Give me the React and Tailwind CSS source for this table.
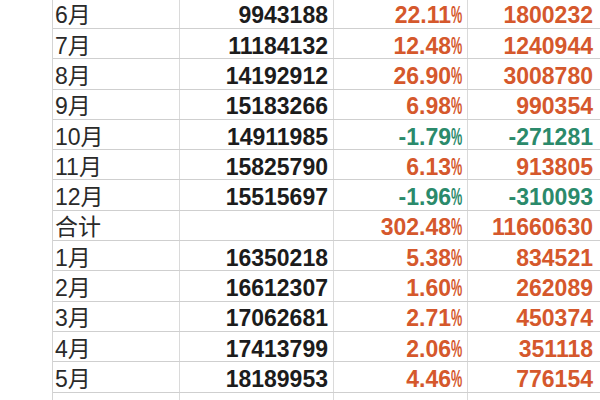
const rows = [
  { m: '6月', v: '9943188', p: '22.11', d: '1800232', neg: false },
  { m: '7月', v: '11184132', p: '12.48', d: '1240944', neg: false },
  { m: '8月', v: '14192912', p: '26.90', d: '3008780', neg: false },
  { m: '9月', v: '15183266', p: '6.98', d: '990354', neg: false },
  { m: '10月', v: '14911985', p: '-1.79', d: '-271281', neg: true },
  { m: '11月', v: '15825790', p: '6.13', d: '913805', neg: false },
  { m: '12月', v: '15515697', p: '-1.96', d: '-310093', neg: true },
  { m: '合计', v: '', p: '302.48', d: '11660630', neg: false },
  { m: '1月', v: '16350218', p: '5.38', d: '834521', neg: false },
  { m: '2月', v: '16612307', p: '1.60', d: '262089', neg: false },
  { m: '3月', v: '17062681', p: '2.71', d: '450374', neg: false },
  { m: '4月', v: '17413799', p: '2.06', d: '351118', neg: false },
  { m: '5月', v: '18189953', p: '4.46', d: '776154', neg: false },
  { m: '', v: '', p: '', d: '', neg: false },
]

function Pct({ value }) {
  if (!value) return null
  return (
    <span>
      {value}
      <span className="inline-block w-[11px] origin-left scale-x-[0.55]">%</span>
    </span>
  )
}

export default function App() {
  return (
    <div className="w-[600px] h-[400px] overflow-hidden bg-white font-['Liberation_Sans','Noto_Sans_CJK_SC',sans-serif]">
      <div className="ml-[52px] -mt-[1.3px] border-l border-[#d4d4d4]">
        {rows.map((r, i) => {
          const color = r.neg ? 'text-[#2b8a6b]' : 'text-[#d5582c]'
          return (
            <div
              key={i}
              className="grid grid-cols-[127px_154px_134px_132px] h-[30.3px] border-b border-[#cfcfcf] text-[23px] leading-none"
            >
              <div className="flex items-center pt-[5px] pl-[2px] border-r border-[#dadada] text-[#2a2a2a]">
                {r.m}
              </div>
              <div className="flex items-center justify-end pt-[5px] pr-[5px] border-r border-[#dadada] font-bold text-[#1c1c1c]">
                {r.v}
              </div>
              <div className={`flex items-center justify-end pt-[5px] pr-[5px] border-r border-[#dadada] font-bold ${color}`}>
                <Pct value={r.p} />
              </div>
              <div className={`flex items-center justify-end pt-[5px] pr-[7px] font-bold ${color}`}>
                {r.d}
              </div>
            </div>
          )
        })}
      </div>
    </div>
  )
}
